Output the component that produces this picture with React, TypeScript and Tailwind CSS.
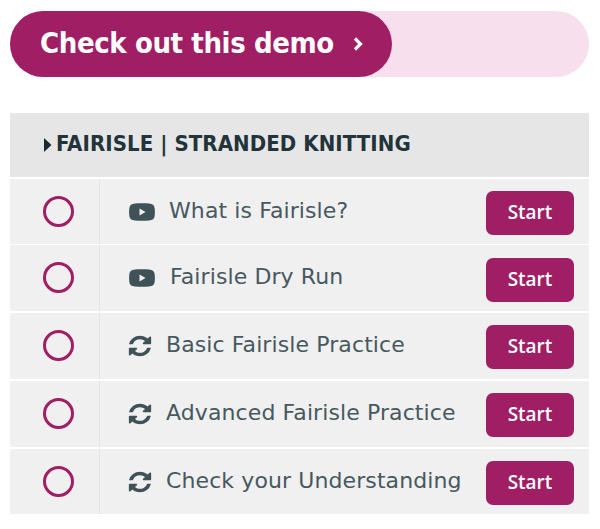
const rows = [
  { icon: "video", label: "What is Fairisle?", row: "h-[65px] mb-[1px]", btn: "mt-[12px]", gap: "gap-[14px]", pl: "pl-[29px]" },
  { icon: "video", label: "Fairisle Dry Run", row: "h-[66px] mb-[2px]", btn: "mt-[13px]", gap: "gap-[15px]", pl: "pl-[29px]" },
  { icon: "sync", label: "Basic Fairisle Practice", row: "h-[66px] mb-[2px]", btn: "mt-[12px]", gap: "gap-[13px]", pl: "pl-[27px]" },
  { icon: "sync", label: "Advanced Fairisle Practice", row: "h-[66px] mb-[2px]", btn: "mt-[12px]", gap: "gap-[13px]", pl: "pl-[27px]" },
  { icon: "sync", label: "Check your Understanding", row: "h-[65px]", btn: "mt-[12px]", gap: "gap-[13px]", pl: "pl-[27px]" },
];

function VideoIcon() {
  return (
    <svg width="26" height="18" viewBox="0 0 26 18" className="shrink-0">
      <path
        fill="#3f5257"
        d="M6 .6C10 .2 16 .2 20 .6c3.400.300 5.400 1.600 5.700 5 .300 2.200.300 4.600 0 6.800-.300 3.400-2.300 4.700-5.700 5-4 .400-10 .400-14 0-3.400-.300-5.400-1.600-5.700-5-.300-2.200-.300-4.600 0-6.800C.6 2.200 2.600.9 6 .6z"
      />
      <path fill="#f0f0f0" d="M10.500 5.500v7l6-3.500z" />
    </svg>
  );
}

function SyncIcon() {
  return (
    <svg width="26" height="24" viewBox="0 0 1792 1792" preserveAspectRatio="none" className="shrink-0">
      <path
        fill="#3f5257"
        d="M1639 1056q0 5-1 7-64 268-268 434.500t-478 166.500q-146 0-282.500-55t-243.500-157l-129 129q-19 19-45 19t-45-19-19-45v-448q0-26 19-45t45-19h448q26 0 45 19t19 45-19 45l-137 137q71 66 161 102t187 36q134 0 250-65t186-179q11-17 53-117 8-23 30-23h192q13 0 22.500 9.500t9.500 22.500zm25-800v448q0 26-19 45t-45 19h-448q-26 0-45-19t-19-45 19-45l138-138q-148-137-349-137-134 0-250 65t-186 179q-11 17-53 117-8 23-30 23h-199q-13 0-22.500-9.500t-9.500-22.500v-7q65-268 270-434.500t480-166.500q146 0 284 55.500t245 156.500l130-129q19-19 45-19t45 19 19 45z"
      />
    </svg>
  );
}

export default function App() {
  return (
    <div className="w-[600px] h-[529px] bg-white pt-[11px] px-[10px] font-['DejaVu_Sans',sans-serif] overflow-hidden">
      <div className="h-[66px] w-[579px] rounded-[33px] bg-[#f8dfee]">
        <div className="h-[66px] w-[382px] rounded-[33px] bg-[#a01e63] pl-[30px] flex items-center gap-[19px] text-white">
          <span className="text-[29px] font-bold tracking-[-0.4px] leading-none font-['DejaVu_Sans_Condensed','Open_Sans',sans-serif] -mt-[2px]">Check out this demo</span>
          <svg width="10" height="16" viewBox="0 0 10 16" fill="none" stroke="white" strokeWidth="3.2">
            <path d="M2 2.500l5.500 5.500-5.500 5.500" />
          </svg>
        </div>
      </div>
      <div className="mt-[36px] w-[579px]">
        <div className="h-[64px] mb-[2px] bg-[#e6e6e6] pl-[34px] flex items-center gap-[4px] text-[#22333a] text-[22px] font-bold tracking-[0.07px] leading-none font-['DejaVu_Sans_Condensed','DejaVu_Sans',sans-serif]">
          <svg width="8" height="14" viewBox="0 0 8 14" className="shrink-0">
            <path fill="#1c2a30" d="M0 0l7.500 7-7.500 7z" />
          </svg>
          <span className="-mt-[2px]">FAIRISLE | STRANDED KNITTING</span>
        </div>
        <div className="flex flex-col">
          {rows.map((r) => (
            <div key={r.label} className={`${r.row} bg-[#f0f0f0] flex items-start text-[#47585f]`}>
              <div className="w-[90px] h-full border-r border-[#e1e7e7] pt-[17px] pl-[33px]">
                <div className="w-[31px] h-[31px] rounded-full border-[3px] border-[#a01e63]" />
              </div>
              <div className={`flex-1 h-full flex items-center ${r.pl} ${r.gap}`}>
                {r.icon === "video" ? <VideoIcon /> : <SyncIcon />}
                <span className="text-[22px] tracking-[0.1px] leading-none -mt-[2px] whitespace-nowrap">{r.label}</span>
              </div>
              <button className={`${r.btn} w-[88px] h-[44px] mr-[15px] rounded-[7px] bg-[#a01e63] text-white text-[19px] leading-none pb-[2px] font-['Open_Sans',sans-serif] font-semibold shrink-0`}>
                Start
              </button>
            </div>
          ))}
        </div>
      </div>
    </div>
  );
}
